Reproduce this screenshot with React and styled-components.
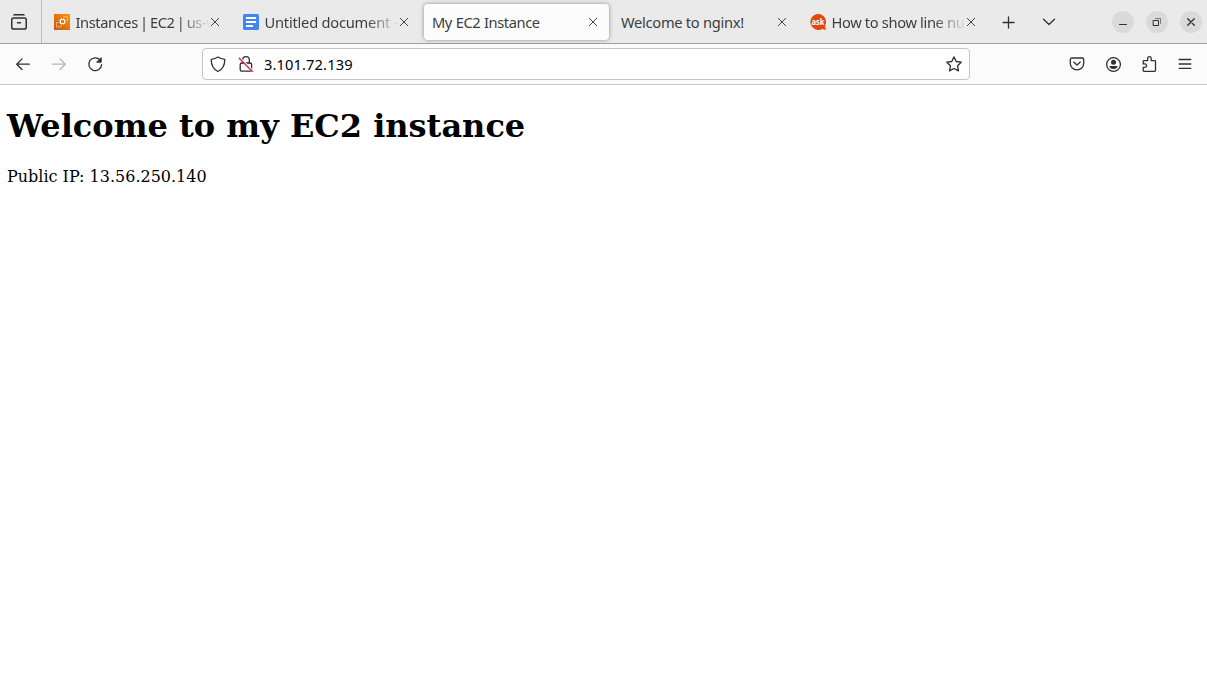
import React from 'react';
import styled, { createGlobalStyle } from 'styled-components';

const GlobalStyle = createGlobalStyle`
  * { box-sizing: border-box; }
  body { margin: 0; background: #fff; }
`;

const Browser = styled.div`
  width: 100%;
  height: 100vh;
  overflow: hidden;
  display: flex;
  flex-direction: column;
  font-family: 'Noto Sans', 'Open Sans', sans-serif;
  font-size: 14.67px;
`;

const TabBar = styled.header`
  display: flex;
  flex: none;
  height: 44px;
  background: #eaeaea;
  border-bottom: 1px solid #a0a0a0;
  color: #3d3d3d;
`;

const ViewButton = styled.div`
  width: 42px;
  height: 43px;
  padding: 14px 0 0 11px;
  border-right: 1px solid #b9b9b9;
`;

const Tabs = styled.nav`
  display: flex;
  margin-left: 1px;
`;

const Tab = styled.div`
  width: 189px;
  height: 43px;
  padding: 4px 3px 3px;
`;

const TabBody = styled.div`
  display: flex;
  align-items: center;
  height: 36px;
  width: 185px;
  padding: 0 11px 0 8px;
  border-radius: 4px;
  background: ${(p) => (p.$active ? '#fcfcfc' : 'transparent')};
  box-shadow: ${(p) => (p.$active ? '0 0 4px rgba(0, 0, 0, 0.4)' : 'none')};
`;

const Favicon = styled.span`
  flex: none;
  width: 16px;
  height: 16px;
  margin: 0 5.5px 0 0;
  display: flex;
`;

const TabLabel = styled.span`
  flex: 1;
  min-width: 0;
  height: 22px;
  line-height: 22px;
  overflow: hidden;
  white-space: nowrap;
  letter-spacing: ${(p) => p.$tracking || 0}px;
  word-spacing: ${(p) => p.$wordGap || 0}px;
  mask-image: ${(p) => (p.$fade ? 'linear-gradient(to left, transparent 0, #000 32px)' : 'none')};
`;

const CloseIcon = styled.svg`
  flex: none;
  width: 10px;
  height: 10px;
`;

const TabTools = styled.div`
  display: flex;
  gap: 26px;
  padding: 15px 0 0 13px;
`;

const WindowControls = styled.div`
  display: flex;
  gap: 12px;
  margin-left: auto;
  padding: 11px 5px 0 0;
`;

const WindowButton = styled.div`
  width: 22px;
  height: 22px;
  border-radius: 50%;
  background: #dadada;
  display: flex;
`;

const Toolbar = styled.div`
  display: flex;
  flex: none;
  height: 41px;
  padding: 4px 13px 0 14px;
  background: #fbfbfb;
  border-bottom: 1px solid #c9c9c9;
`;

const NavButtons = styled.div`
  display: flex;
  align-items: center;
  gap: 18px;
  width: 188px;
  height: 32px;
`;

const AddressBar = styled.div`
  display: flex;
  align-items: center;
  width: 768px;
  height: 32px;
  padding: 0 6px 0 6px;
  border: 1px solid #c5c5c5;
  border-radius: 4px;
  background: #fff;
`;

const Address = styled.span`
  flex: 1;
  margin-left: 10px;
  line-height: 22px;
  color: #000;
  letter-spacing: ${(p) => p.$tracking}px;
`;

const LockSlot = styled.span`
  display: flex;
  margin-left: 11px;
`;

const ToolButtons = styled.div`
  display: flex;
  align-items: center;
  gap: 18px;
  height: 32px;
  margin-left: auto;
`;

const Page = styled.main`
  flex: 1;
  padding: 0 7px;
  background: #fff;
  color: #000;
  font-family: 'DejaVu Serif', serif;
  font-size: 16px;
`;

const Title = styled.h1`
  margin: 22px 0;
  font-size: 32px;
  line-height: 38px;
  font-weight: bold;
`;

const Paragraph = styled.p`
  margin: 0;
  line-height: 19px;
`;

const Glyph = ({ size = 18, color = '#303033', width = 1.3, children }) => (
  <svg width={size} height={size} viewBox={`0 0 ${size} ${size}`} fill="none"
    stroke={color} strokeWidth={width} strokeLinecap="round" strokeLinejoin="round">
    {children}
  </svg>
);

const Ec2Icon = () => (
  <svg width="16" height="16" viewBox="0 0 16 16">
    <defs>
      <linearGradient id="ec2" x1="0" y1="1" x2="1" y2="0">
        <stop offset="0" stopColor="#cc5514" />
        <stop offset="1" stopColor="#fa9704" />
      </linearGradient>
    </defs>
    <rect width="16" height="16" fill="url(#ec2)" />
    <g fill="none" stroke="#fff">
      <rect x="6.5" y="5.5" width="4" height="4" rx="0.5" strokeWidth="1.1" />
      <path d="M4.5 8.5h-2v4.5h4.5v-2M9 2.8h4.5v4.4M7.5 5V3.8M9.5 5V3.8M7.5 10v1.2M9.5 10v1.2M6 6.5H4.8M6 8.5H4.8M11 6.5h1.2M11 8.5h1.2" strokeWidth="0.7" opacity="0.65" />
    </g>
  </svg>
);

const DocsIcon = () => (
  <svg width="16" height="16" viewBox="0 0 16 16">
    <rect width="16" height="16" rx="1.6" fill="#4285f4" />
    <path d="M3 4h10M3 8h10M3 12h7" stroke="#fff" strokeWidth="1.9" />
  </svg>
);

const AskIcon = () => (
  <svg width="16" height="16" viewBox="0 0 16 16">
    <path d="M8 0a8 8 0 1 0 4.4 14.9L15.8 16l-.6-4.3A8 8 0 0 0 8 0z" fill="#dd4b05" />
    <text x="8" y="10.8" textAnchor="middle" textLength="13" lengthAdjust="spacingAndGlyphs"
      fontFamily="Open Sans, sans-serif" fontSize="9" fontWeight="700" fill="#fff">ask</text>
  </svg>
);

const TABS = [
  { label: 'Instances | EC2 | us-w', icon: <Ec2Icon />, fade: true, tracking: -0.4, wordGap: -1.2 },
  { label: 'Untitled document -', icon: <DocsIcon />, fade: true, tracking: -0.22 },
  { label: 'My EC2 Instance', active: true, tracking: -0.42, wordGap: 0.4 },
  { label: 'Welcome to nginx!', tracking: -0.28 },
  { label: 'How to show line nu', icon: <AskIcon />, fade: true, tracking: -0.35 },
];

export default function App() {
  return (
    <Browser>
      <GlobalStyle />
      <TabBar>
        <ViewButton>
          <Glyph size={16} width={1.5}>
            <path d="M3 1Q3.3.7 4 .7h8q.7 0 1 .3" />
            <rect x=".75" y="4" width="14.5" height="11" rx="1.8" />
            <path d="M6.5 8.7h3" />
          </Glyph>
        </ViewButton>
        <Tabs>
          {TABS.map((t) => (
            <Tab key={t.label}>
              <TabBody $active={t.active}>
                {t.icon && <Favicon>{t.icon}</Favicon>}
                <TabLabel $fade={t.fade} $tracking={t.tracking} $wordGap={t.wordGap}>{t.label}</TabLabel>
                <CloseIcon viewBox="0 0 10 10">
                  <path d="M1 1l8 8M9 1L1 9" stroke="#444" strokeWidth="1" />
                </CloseIcon>
              </TabBody>
            </Tab>
          ))}
        </Tabs>
        <TabTools>
          <Glyph size={15}><path d="M7.5 2v11M2 7.5h11" /></Glyph>
          <Glyph size={15}><path d="M1.5 4.3L7 9.5l5.5-5.2" /></Glyph>
        </TabTools>
        <WindowControls>
          <WindowButton><Glyph size={22} width={1.1}><path d="M7.5 13.5h7" /></Glyph></WindowButton>
          <WindowButton>
            <Glyph size={22} width={1}>
              <rect x="7.5" y="9.5" width="5" height="5" />
              <path d="M9.5 7.5h5v5" opacity=".55" />
            </Glyph>
          </WindowButton>
          <WindowButton><Glyph size={22}><path d="M7.7 7.7l6.6 6.6M14.3 7.7l-6.6 6.6" /></Glyph></WindowButton>
        </WindowControls>
      </TabBar>
      <Toolbar>
        <NavButtons>
          <Glyph><path d="M15.3 9.2H2.7M8 3.9L2.7 9.2l5.3 5.3" /></Glyph>
          <Glyph color="#b4b4b4"><path d="M2.7 9.2h12.6M10 3.9l5.3 5.3-5.3 5.3" /></Glyph>
          <Glyph>
            <path d="M14 5A6.4 6.4 0 1 0 15.6 9.6" />
            <path d="M15.2 3v4.2H11z" fill="#303033" strokeWidth="1" />
          </Glyph>
        </NavButtons>
        <AddressBar>
          <Glyph><path d="M9 2.1c2 1.5 4 2 6.8 2.3 0 4.9-1.3 9.4-6.8 12.1-5.5-2.7-6.8-7.2-6.8-12.1C5 4.1 7 3.6 9 2.1z" /></Glyph>
          <LockSlot>
            <Glyph size={16}>
              <path d="M4.7 7V4a3.3 3.3 0 0 1 6.6 0v3" />
              <rect x="2.2" y="7" width="11.4" height="8.2" rx="1.6" />
              <path d="M2 1.6l13 13" stroke="#fff" strokeWidth="1.3" />
              <path d="M1.2 2.2l13.2 13.2" stroke="#e22850" strokeWidth="1.4" />
            </Glyph>
          </LockSlot>
          <Address $tracking={0.12}>3.101.72.139</Address>
          <Glyph><path d="M9 1.9l2.2 4.6 5 .7-3.6 3.6.9 5.1L9 13.5l-4.5 2.4.9-5.1-3.6-3.6 5-.7z" /></Glyph>
        </AddressBar>
        <ToolButtons>
          <Glyph>
            <path d="M3.7 3h10.6q1.4 0 1.4 1.4v3.8a6.7 6.7 0 0 1-13.4 0V4.4Q2.3 3 3.7 3z" />
            <path d="M5.7 7.1L9 10l3.3-2.9" />
          </Glyph>
          <Glyph>
            <circle cx="9.5" cy="9.5" r="6.9" />
            <circle cx="9.5" cy="7.2" r="2.5" fill="#303033" stroke="none" />
            <path d="M5.5 11h8q0 3-4 3t-4-3z" fill="#303033" stroke="none" />
          </Glyph>
          <Glyph>
            <path d="M4 16.3q-.8 0-.8-.8v-3.1h1.6a1.7 1.7 0 0 0 0-3.5H3.2V6.5q0-.8.8-.8h3.6V3.4a1.8 1.8 0 0 1 3.6 0v2.3h3.5q.8 0 .8.8v9q0 .8-.8.8z" />
          </Glyph>
          <Glyph><path d="M3.2 4.5h11.6M3.2 9h11.6M3.2 13.3h11.6" /></Glyph>
        </ToolButtons>
      </Toolbar>
      <Page>
        <Title>Welcome to my EC2 instance</Title>
        <Paragraph>Public IP: 13.56.250.140</Paragraph>
      </Page>
    </Browser>
  );
}
